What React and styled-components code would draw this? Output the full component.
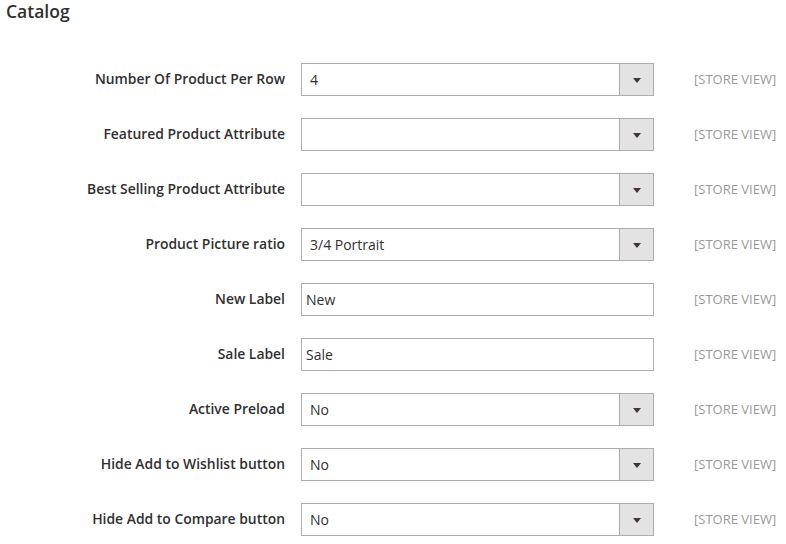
import React from "react";
import styled, { createGlobalStyle } from "styled-components";

const Global = createGlobalStyle`
  html, body { margin: 0; padding: 0; background: #fff; }
  body { font-family: "Open Sans", "Noto Sans", sans-serif; color: #303030; }
`;

const Page = styled.div`
  width: 786px;
  height: 544px;
  overflow: hidden;
  box-sizing: border-box;
`;

const Title = styled.h2`
  margin: 0;
  padding: 0 0 0 6px;
  font-size: 17.5px;
  font-weight: 600;
  line-height: 22px;
  color: #303030;
  height: 63px;
  box-sizing: border-box;
`;

const Form = styled.div`
  display: grid;
  grid-template-columns: 301px 353px 1fr;
  row-gap: 22px;
  align-items: center;
`;

const Label = styled.label`
  text-align: right;
  padding-right: 16px;
  padding-bottom: 2px;
  font-size: 13.9px;
  font-weight: 600;
  color: #303030;
  line-height: 18px;
`;

const Field = styled.div`
  height: 33px;
  box-sizing: border-box;
  border: 1px solid #adadad;
  background: #fff;
  display: flex;
  align-items: center;
  padding-left: ${(p) => (p.$select ? "8px" : "4px")};
  font-size: 14px;
  color: #303030;
`;

const Value = styled.span`
  flex: 1;
  line-height: 18px;
`;

const ArrowBox = styled.div`
  width: 33px;
  align-self: stretch;
  border-left: 1px solid #adadad;
  background: #e3e3e3;
  display: flex;
  align-items: center;
  justify-content: center;
`;

const Triangle = styled.span`
  width: 0;
  height: 0;
  border-left: 4px solid transparent;
  border-right: 4px solid transparent;
  border-top: 5px solid #41362f;
  margin-top: 1px;
`;

const Scope = styled.div`
  padding-left: 40px;
  padding-bottom: 2px;
  font-size: 13px;
  color: #999;
  text-transform: uppercase;
  line-height: 16px;
  white-space: nowrap;
`;

const rows = [
  { label: "Number Of Product Per Row", value: "4", select: true },
  { label: "Featured Product Attribute", value: "", select: true },
  { label: "Best Selling Product Attribute", value: "", select: true },
  { label: "Product Picture ratio", value: "3/4 Portrait", select: true },
  { label: "New Label", value: "New", select: false },
  { label: "Sale Label", value: "Sale", select: false },
  { label: "Active Preload", value: "No", select: true },
  { label: "Hide Add to Wishlist button", value: "No", select: true },
  { label: "Hide Add to Compare button", value: "No", select: true },
];

export default function App() {
  return (
    <Page>
      <Global />
      <Title>Catalog</Title>
      <Form>
        {rows.map((r) => (
          <React.Fragment key={r.label}>
            <Label>{r.label}</Label>
            <Field $select={r.select}>
              <Value>{r.value}</Value>
              {r.select && (
                <ArrowBox>
                  <Triangle />
                </ArrowBox>
              )}
            </Field>
            <Scope>[Store View]</Scope>
          </React.Fragment>
        ))}
      </Form>
    </Page>
  );
}
